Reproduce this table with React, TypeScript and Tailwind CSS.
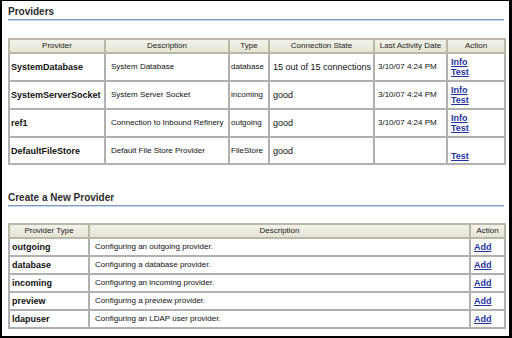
import React from "react";

const font = { fontFamily: '"Liberation Sans", Arial, sans-serif' };

type Provider = {
  name: string;
  description: string;
  type: string;
  state: string;
  date: string;
  info: boolean;
};

const providers: Provider[] = [
  { name: "SystemDatabase", description: "System Database", type: "database", state: "15 out of 15 connections", date: "3/10/07 4:24 PM", info: true },
  { name: "SystemServerSocket", description: "System Server Socket", type: "incoming", state: "good", date: "3/10/07 4:24 PM", info: true },
  { name: "ref1", description: "Connection to Inbound Refinery", type: "outgoing", state: "good", date: "3/10/07 4:24 PM", info: true },
  { name: "DefaultFileStore", description: "Default File Store Provider", type: "FileStore", state: "good", date: "", info: false },
];

const newTypes = [
  { type: "outgoing", description: "Configuring an outgoing provider." },
  { type: "database", description: "Configuring a database provider." },
  { type: "incoming", description: "Configuring an incoming provider." },
  { type: "preview", description: "Configuring a preview provider." },
  { type: "ldapuser", description: "Configuring an LDAP user provider." },
];

const th =
  "border-2 border-[#b9b7a8] bg-gradient-to-b from-[#f3f2ea] to-[#e6e4d4] text-[8px] font-normal text-[#222] text-center leading-[10px] h-[14px] p-0";
const td = "border-2 border-[#b0b0b0] text-[8px] text-[#111] leading-[10px] p-0 align-middle";
const link = "text-[#1f33a3] font-bold underline text-[9px] leading-[10px]";

function SectionTitle({ title }: { title: string }) {
  return (
    <div>
      <div className="h-[12px] text-[10px] font-bold leading-[12px] text-[#2c2c2c]">{title}</div>
      <div className="mt-px h-[2px] w-[496px] border-t border-[#7d9ac4] bg-[#c9d6e8]" />
    </div>
  );
}

export default function App() {
  return (
    <div
      style={font}
      className="w-[512px] h-[338px] overflow-hidden bg-white border-t border-l-2 border-r-[3px] border-b-2 border-black pl-[6px] pt-[5px]"
    >
      <SectionTitle title="Providers" />
      <table className="mt-[17px] w-[496px] table-fixed border-collapse">
        <colgroup>
          <col className="w-[96px]" />
          <col className="w-[124px]" />
          <col className="w-[40px]" />
          <col className="w-[105px]" />
          <col className="w-[73px]" />
          <col className="w-[58px]" />
        </colgroup>
        <thead>
          <tr>
            <th className={th}>Provider</th>
            <th className={th}>Description</th>
            <th className={th}>Type</th>
            <th className={th}>Connection State</th>
            <th className={th}>Last Activity Date</th>
            <th className={th}>Action</th>
          </tr>
        </thead>
        <tbody>
          {providers.map((p, i) => (
            <tr key={p.name} className={i === 3 ? "h-[27px]" : "h-[28px]"}>
              <td className={`${td} pl-[1px] text-[9px] font-bold whitespace-nowrap`}>{p.name}</td>
              <td className={`${td} pl-[5px]`}>{p.description}</td>
              <td className={`${td} pl-[1px] overflow-hidden whitespace-nowrap`}>{p.type}</td>
              <td className={`${td} pl-[3px] text-[9px] whitespace-nowrap`}>{p.state}</td>
              <td className={`${td} pl-[3px]`}>{p.date}</td>
              <td className={`${td} pl-[3px]`}>
                <div className="flex flex-col">
                  {p.info ? <a className={link}>Info</a> : <span className="h-[10px]" />}
                  <a className={link}>Test</a>
                </div>
              </td>
            </tr>
          ))}
        </tbody>
      </table>

      <div className="mt-[27px]">
        <SectionTitle title="Create a New Provider" />
      </div>
      <table className="mt-[16px] w-[496px] table-fixed border-collapse">
        <colgroup>
          <col className="w-[80px]" />
          <col className="w-[381px]" />
          <col className="w-[35px]" />
        </colgroup>
        <thead>
          <tr>
            <th className={th}>Provider Type</th>
            <th className={th}>Description</th>
            <th className={th}>Action</th>
          </tr>
        </thead>
        <tbody>
          {newTypes.map((t) => (
            <tr key={t.type} className="h-[18px]">
              <td className={`${td} pl-[2px] text-[9px] font-bold`}>{t.type}</td>
              <td className={`${td} pl-[5px]`}>{t.description}</td>
              <td className={`${td} pl-[3px]`}>
                <a className={link}>Add</a>
              </td>
            </tr>
          ))}
        </tbody>
      </table>
    </div>
  );
}
